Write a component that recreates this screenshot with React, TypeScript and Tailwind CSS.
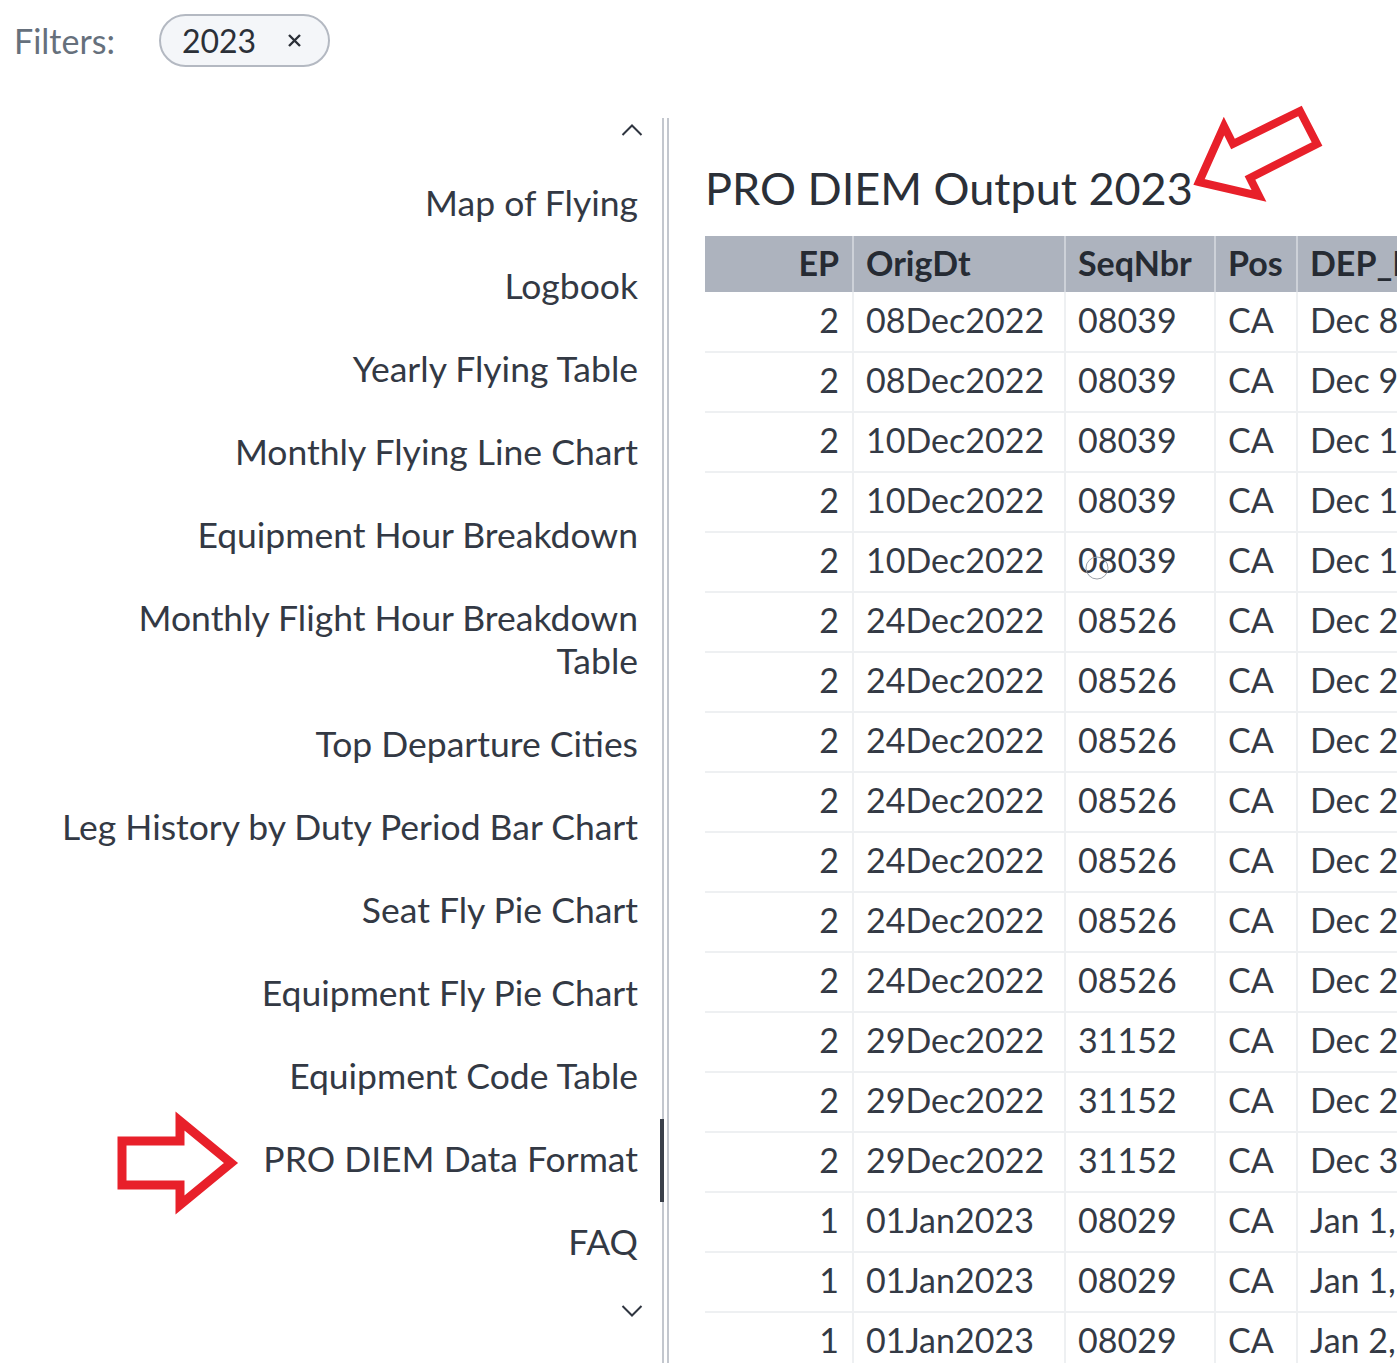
import React from 'react'

const navItems: { label: React.ReactNode; active?: boolean }[] = [
  { label: 'Map of Flying' },
  { label: 'Logbook' },
  { label: 'Yearly Flying Table' },
  { label: 'Monthly Flying Line Chart' },
  { label: 'Equipment Hour Breakdown' },
  {
    label: (
      <>
        Monthly Flight Hour Breakdown
        <br />
        Table
      </>
    ),
  },
  { label: 'Top Departure Cities' },
  { label: 'Leg History by Duty Period Bar Chart' },
  { label: 'Seat Fly Pie Chart' },
  { label: 'Equipment Fly Pie Chart' },
  { label: 'Equipment Code Table' },
  { label: 'PRO DIEM Data Format', active: true },
  { label: 'FAQ' },
]

type Row = { ep: string; orig: string; seq: string; pos: string; dep: string }

const rows: Row[] = [
  { ep: '2', orig: '08Dec2022', seq: '08039', pos: 'CA', dep: 'Dec 8, 2022' },
  { ep: '2', orig: '08Dec2022', seq: '08039', pos: 'CA', dep: 'Dec 9, 2022' },
  { ep: '2', orig: '10Dec2022', seq: '08039', pos: 'CA', dep: 'Dec 10, 2022' },
  { ep: '2', orig: '10Dec2022', seq: '08039', pos: 'CA', dep: 'Dec 11, 2022' },
  { ep: '2', orig: '10Dec2022', seq: '08039', pos: 'CA', dep: 'Dec 12, 2022' },
  { ep: '2', orig: '24Dec2022', seq: '08526', pos: 'CA', dep: 'Dec 24, 2022' },
  { ep: '2', orig: '24Dec2022', seq: '08526', pos: 'CA', dep: 'Dec 25, 2022' },
  { ep: '2', orig: '24Dec2022', seq: '08526', pos: 'CA', dep: 'Dec 25, 2022' },
  { ep: '2', orig: '24Dec2022', seq: '08526', pos: 'CA', dep: 'Dec 26, 2022' },
  { ep: '2', orig: '24Dec2022', seq: '08526', pos: 'CA', dep: 'Dec 26, 2022' },
  { ep: '2', orig: '24Dec2022', seq: '08526', pos: 'CA', dep: 'Dec 27, 2022' },
  { ep: '2', orig: '24Dec2022', seq: '08526', pos: 'CA', dep: 'Dec 27, 2022' },
  { ep: '2', orig: '29Dec2022', seq: '31152', pos: 'CA', dep: 'Dec 29, 2022' },
  { ep: '2', orig: '29Dec2022', seq: '31152', pos: 'CA', dep: 'Dec 29, 2022' },
  { ep: '2', orig: '29Dec2022', seq: '31152', pos: 'CA', dep: 'Dec 30, 2022' },
  { ep: '1', orig: '01Jan2023', seq: '08029', pos: 'CA', dep: 'Jan 1, 2023' },
  { ep: '1', orig: '01Jan2023', seq: '08029', pos: 'CA', dep: 'Jan 1, 2023' },
  { ep: '1', orig: '01Jan2023', seq: '08029', pos: 'CA', dep: 'Jan 2, 2023' },
]

function Chevron({ up }: { up?: boolean }) {
  return (
    <svg width="22" height="12" viewBox="0 0 22 12" fill="none" stroke="#2f3540" strokeWidth="2">
      {up ? <path d="M1.5 11 L11 1.5 L20.5 11" /> : <path d="M1.5 1 L11 10.5 L20.5 1" />}
    </svg>
  )
}

// red hand-drawn annotation arrows over the screenshot
function Annotations() {
  return (
    <svg
      className="pointer-events-none absolute left-0 top-0"
      width="1397"
      height="1363"
      viewBox="0 0 1397 1363"
      fill="none"
    >
      <polygon
        points="122,1141 180,1141 180,1121 231,1163 180,1205 180,1185 122,1185"
        stroke="#e8202a"
        strokeWidth="9"
        strokeLinejoin="miter"
      />
      <polygon
        points="1199,182 1259,196 1250,178 1317,144 1300,111 1233,144 1224,126"
        stroke="#e8202a"
        strokeWidth="8"
        strokeLinejoin="miter"
      />
      <circle cx="1097" cy="568" r="11" stroke="#9aa0a8" strokeWidth="1" />
    </svg>
  )
}

export default function App() {
  return (
    <div
      className="relative h-[1363px] w-full overflow-hidden bg-white text-[#333944]"
      style={{ fontFamily: 'Lato, "Noto Sans", sans-serif' }}
    >
      <div className="flex h-[118px] items-start pl-[14px] pt-[14px]">
        <span className="mt-[3px] text-[34px] leading-[47px] text-[#66707c]">Filters:</span>
        <div className="ml-[44px] flex h-[53px] items-center rounded-full border-2 border-[#b4b9c2] bg-[#f4f6f9] pl-[21px] pr-[27px]">
          <span className="text-[32px] leading-none text-[#2b3038]">2023</span>
          <svg className="ml-[32px]" width="13" height="13" viewBox="0 0 13 13" stroke="#2b3038" strokeWidth="2.4">
            <path d="M1 1 L12 12 M12 1 L1 12" />
          </svg>
        </div>
      </div>

      <div className="flex h-[1245px]">
        <nav className="flex w-[664px] shrink-0 flex-col items-end border-r-2 border-[#c3c7ce] text-right">
          <div className="h-[44.5px] pr-[19px] pt-[6px]">
            <Chevron up />
          </div>
          {navItems.map((item, i) => (
            <div
              key={i}
              className="relative w-full pb-[22px] pr-[24px] pt-[18px] text-[35.5px] leading-[43px]"
            >
              {item.label}
              {item.active && (
                <span className="absolute right-[-2px] top-0 h-full w-[4px] bg-[#3b414b]" />
              )}
            </div>
          ))}
          <div className="mt-[20.5px] pr-[19px]">
            <Chevron />
          </div>
        </nav>

        <main className="ml-[3px] min-w-0 flex-1 overflow-hidden border-l-2 border-[#c3c7ce] pl-[36px]">
          <h1 className="mb-[20px] mt-[42px] whitespace-nowrap text-[45px] leading-[56px] text-[#2b3038]">
            PRO DIEM Output 2023
          </h1>
          <table className="w-[900px] table-fixed border-collapse text-[34px]">
            <colgroup>
              <col className="w-[148px]" />
              <col className="w-[212px]" />
              <col className="w-[150px]" />
              <col className="w-[82px]" />
              <col className="w-[308px]" />
            </colgroup>
            <thead>
              <tr className="h-[56px] bg-[#adb3be] text-[#262b33]">
                <th className="border-r-2 border-[#cdd1d8] pb-[4px] pr-[13px] text-right font-bold">EP</th>
                <th className="border-r-2 border-[#cdd1d8] pb-[4px] pl-[12px] text-left font-bold">OrigDt</th>
                <th className="border-r-2 border-[#cdd1d8] pb-[4px] pl-[12px] text-left font-bold">SeqNbr</th>
                <th className="border-r-2 border-[#cdd1d8] pb-[4px] pl-[12px] text-left font-bold">Pos</th>
                <th className="whitespace-nowrap pb-[4px] pl-[12px] text-left font-bold">DEP_DATE</th>
              </tr>
            </thead>
            <tbody className="text-[#343a45]">
              {rows.map((r, i) => (
                <tr key={i} className="h-[60px] border-b-2 border-[#eef0f2]">
                  <td className="border-r-2 border-[#eef0f2] pb-[5px] pr-[13px] text-right">{r.ep}</td>
                  <td className="border-r-2 border-[#eef0f2] pb-[5px] pl-[12px]">{r.orig}</td>
                  <td className="border-r-2 border-[#eef0f2] pb-[5px] pl-[12px]">{r.seq}</td>
                  <td className="border-r-2 border-[#eef0f2] pb-[5px] pl-[12px]">{r.pos}</td>
                  <td className="whitespace-nowrap pb-[5px] pl-[12px]">{r.dep}</td>
                </tr>
              ))}
            </tbody>
          </table>
        </main>
      </div>

      <Annotations />
    </div>
  )
}
